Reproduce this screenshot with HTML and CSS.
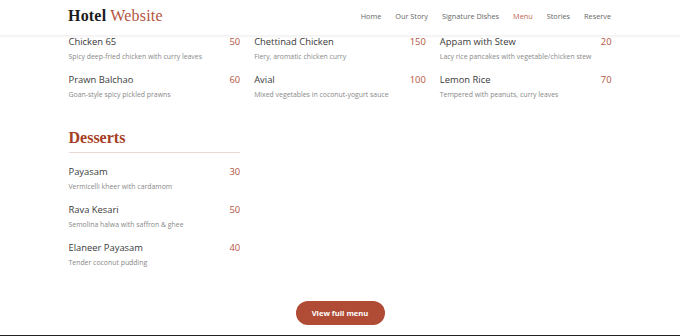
FILE: index.html
```html
<!DOCTYPE html>
<html lang="en">
<head>
<meta charset="utf-8">
<title>Hotel Website - Menu</title>
<link rel="stylesheet" href="styles.css">
</head>
<body>
<header class="site-header">
  <div class="logo"><span class="logo-dark">Hotel</span> <span class="logo-accent">Website</span></div>
  <nav class="nav">
    <a href="#">Home</a>
    <a href="#">Our Story</a>
    <a href="#">Signature Dishes</a>
    <a href="#" class="active">Menu</a>
    <a href="#">Stories</a>
    <a href="#">Reserve</a>
  </nav>
</header>
<main class="content">
  <section class="grid">
    <div class="col">
      <div class="item"><div class="row"><span class="name">Chicken 65</span><span class="price">50</span></div><p class="desc">Spicy deep-fried chicken with curry leaves</p></div>
      <div class="item"><div class="row"><span class="name">Prawn Balchao</span><span class="price">60</span></div><p class="desc">Goan-style spicy pickled prawns</p></div>
    </div>
    <div class="col">
      <div class="item"><div class="row"><span class="name">Chettinad Chicken</span><span class="price">150</span></div><p class="desc">Fiery, aromatic chicken curry</p></div>
      <div class="item"><div class="row"><span class="name">Avial</span><span class="price">100</span></div><p class="desc">Mixed vegetables in coconut-yogurt sauce</p></div>
    </div>
    <div class="col">
      <div class="item"><div class="row"><span class="name">Appam with Stew</span><span class="price">20</span></div><p class="desc">Lacy rice pancakes with vegetable/chicken stew</p></div>
      <div class="item"><div class="row"><span class="name">Lemon Rice</span><span class="price">70</span></div><p class="desc">Tempered with peanuts, curry leaves</p></div>
    </div>
  </section>
  <section class="grid desserts">
    <div class="col">
      <h2 class="section-title">Desserts</h2>
      <div class="item"><div class="row"><span class="name">Payasam</span><span class="price">30</span></div><p class="desc">Vermicelli kheer with cardamom</p></div>
      <div class="item"><div class="row"><span class="name">Rava Kesari</span><span class="price">50</span></div><p class="desc">Semolina halwa with saffron &amp; ghee</p></div>
      <div class="item"><div class="row"><span class="name">Elaneer Payasam</span><span class="price">40</span></div><p class="desc">Tender coconut pudding</p></div>
    </div>
  </section>
  <div class="cta"><a href="#" class="btn">View full menu</a></div>
</main>
<footer class="footer"></footer>
</body>
</html>
```
FILE: styles.css
```css
* { box-sizing: border-box; }
html, body { margin: 0; padding: 0; background: #fff; }
body { font-family: "Open Sans", "Noto Sans", sans-serif; color: #333; }
a { text-decoration: none; }

.site-header {
  height: 36px;
  display: flex;
  align-items: center;
  justify-content: space-between;
  padding: 0 69px 3px 68px;
  box-shadow: 0 1px 2px rgba(0,0,0,0.05);
  border-bottom: 1px solid #f3f3f3;
}
.logo { font-family: "Liberation Serif", serif; font-size: 16px; letter-spacing: 0.2px; }
.logo-dark { color: #1c1c1c; font-weight: 700; }
.logo-accent { color: #b4543e; }
.nav { display: flex; gap: 14px; }
.nav a { font-size: 7.3px; color: #666; }
.nav a.active { color: #c0664f; }

.content { width: 543px; margin: 0 auto; }
.grid { display: grid; grid-template-columns: repeat(3, 1fr); column-gap: 14px; }
.grid:first-child { margin-top: -3px; }
.item { margin-bottom: 7px; }
.row { display: flex; justify-content: space-between; align-items: center; height: 16px; }
.name { font-size: 9.4px; color: #3a3a3a; font-weight: 500; }
.price { font-size: 9.4px; color: #b4543e; }
.desc { margin: 0; padding-top: 1px; font-size: 6.9px; line-height: 14px; color: #888; }

.desserts { margin-top: 17px; }
.section-title {
  margin: 0 0 10px;
  font-family: "Liberation Serif", serif;
  font-size: 16px;
  line-height: 24px;
  font-weight: 700;
  color: #a53e24;
  padding-bottom: 2px;
  border-bottom: 1px solid #e9d9d2;
}
.cta { display: flex; justify-content: center; margin-top: 24px; }
.btn {
  display: inline-flex;
  align-items: center;
  justify-content: center;
  width: 89px;
  height: 24px;
  border-radius: 12px;
  background: #b04b35;
  color: #fff;
  font-size: 7.6px;
  font-weight: 700;
}
.footer { height: 10px; background: #222; margin-top: 10px; }
```
